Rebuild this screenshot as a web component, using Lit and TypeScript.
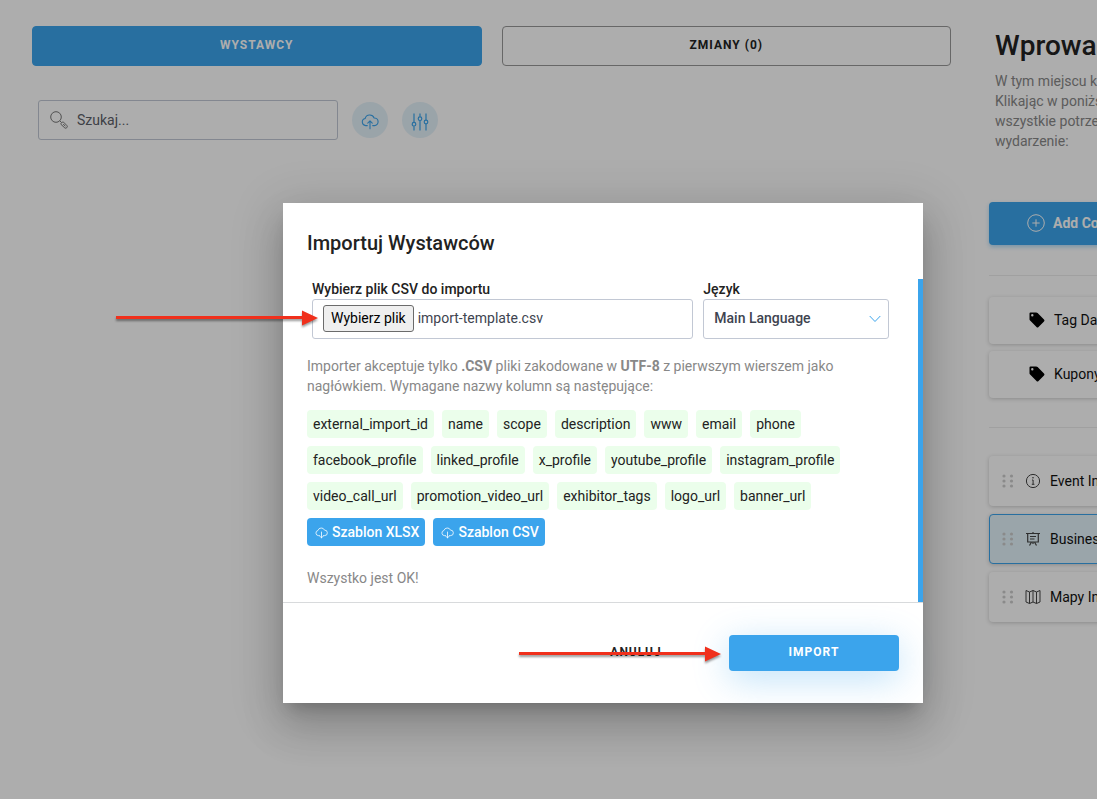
import { LitElement, html, css, svg } from "lit";
import { customElement, state, query } from "lit/decorators.js";

const COLUMNS = [
  "external_import_id", "name", "scope", "description", "www", "email", "phone",
  "facebook_profile", "linked_profile", "x_profile", "youtube_profile", "instagram_profile",
  "video_call_url", "promotion_video_url", "exhibitor_tags", "logo_url", "banner_url",
];

const cloud = (direction: "up" | "down") => html`
  <svg class="cloud" viewBox="0 0 20 18" fill="none" stroke="currentColor" stroke-width="1.2" stroke-linecap="round" stroke-linejoin="round" aria-hidden="true">
    <path d="M7 13H5.2A4 4 0 0 1 4.6 5.1A5.3 5.3 0 0 1 14.6 4.6A4.2 4.2 0 0 1 15 13H13" />
    ${direction === "up"
      ? svg`<path d="M10 16.5V8M7.5 10.2L10 7.7L12.5 10.2" />`
      : svg`<path d="M10 7.5V16.5M7.5 14L10 16.5L12.5 14" />`}
  </svg>`;

const tagIcon = html`
  <svg class="tag" viewBox="0 0 16 16" aria-hidden="true">
    <path fill="currentColor" fill-rule="evenodd" d="M1.5 0.5H7.2Q8 .5 8.6 1.1L15 7.5Q16 8.5 15 9.5L9.5 15Q8.5 16 7.5 15L1.1 8.6Q.5 8 .5 7.2V1.5Q.5 .5 1.5 .5ZM3.3 2.1A1.2 1.2 0 1 0 3.3 4.5A1.2 1.2 0 1 0 3.3 2.1Z" />
  </svg>`;

const infoIcon = html`
  <svg class="glyph" viewBox="0 0 16 16" fill="none" stroke="currentColor" aria-hidden="true">
    <circle cx="8" cy="8" r="6.6" /><path d="M7 7H8.1V11.3M6.8 11.3H9.4" /><circle cx="8" cy="4.8" r=".4" />
  </svg>`;

const boardIcon = html`
  <svg class="glyph" viewBox="0 0 16 16" fill="none" stroke="currentColor" stroke-width="1.2" aria-hidden="true">
    <path d="M1 2.5H15M2.7 2.5V11H13.3V2.5M8 1V2.5M5 5.5H11M5 8H9.5M6.5 11L4.5 14.5M9.5 11L11.5 14.5M8 11V13" />
  </svg>`;

const mapIcon = html`
  <svg class="glyph" viewBox="0 0 16 16" fill="none" stroke="currentColor" stroke-linejoin="round" aria-hidden="true">
    <path d="M1 1.5L4.5 3L8 1.5L11.5 3L15 1.5V13L11.5 14.5L8 13L4.5 14.5L1 13ZM4.5 3V14.5M8 1.5V13M11.5 3V14.5" />
  </svg>`;

const grip = html`
  <svg class="grip" viewBox="0 0 12 14" fill="currentColor" aria-hidden="true">
    <circle cx="2" cy="2" r="1.6" /><circle cx="9.5" cy="2" r="1.6" />
    <circle cx="2" cy="7" r="1.6" /><circle cx="9.5" cy="7" r="1.6" />
    <circle cx="2" cy="12" r="1.6" /><circle cx="9.5" cy="12" r="1.6" />
  </svg>`;

const arrow = html`
  <svg class="arrow" viewBox="0 0 202 20" aria-hidden="true">
    <path fill="#f0301c" d="M0 8H186V2.5L202 10L186 17.5V11H0Z" />
  </svg>`;

@customElement("app-root")
export class AppRoot extends LitElement {
  @state() private fileName = "import-template.csv";
  @query(".file-input") private fileInput!: HTMLInputElement;

  static styles = css`
    :host {
      display: block;
      height: 100vh;
      overflow: hidden;
      font: 14px/20px Roboto, sans-serif;
      color: #222;
      background: #fff;
    }
    * { box-sizing: border-box; }
    button, input, select { font: inherit; color: inherit; margin: 0; }
    button { cursor: pointer; }
    h1, h2, p { margin: 0; }
    a { color: inherit; text-decoration: none; }

    .page {
      position: relative;
      width: calc(100% + 109px);
      min-height: calc(100% + 107px);
      display: grid;
      grid-template-columns: minmax(0, 1fr) 201px;
      gap: 38px;
      padding: 26px 16px 0 32px;
    }
    .tabs { display: grid; grid-template-columns: 1fr 1fr; gap: 20px; }
    .tab, .action {
      height: 40px;
      border: 1px solid #999;
      border-radius: 4px;
      background: none;
      padding: 0 0 3px;
      font-size: 12px;
      font-weight: 700;
      letter-spacing: 1px;
      text-transform: uppercase;
    }
    .tab.on { background: #3ba4ec; border-color: #3ba4ec; color: #fff; }
    .tools { display: flex; align-items: center; padding: 34px 6px 0; gap: 14px; }
    .search {
      display: flex;
      align-items: center;
      gap: 9px;
      width: 300px;
      height: 40px;
      border: 1px solid #c2c8d4;
      border-radius: 3px;
      padding: 0 11px;
      color: #777;
    }
    .search svg { width: 18px; height: 18px; flex: none; }
    .search input { flex: 1; min-width: 0; border: 0; outline: 0; padding: 0; background: none; color: #3e4450; }
    .search input::placeholder { color: #5c6068; opacity: 1; }
    .round {
      width: 36px;
      height: 36px;
      border: 0;
      border-radius: 50%;
      padding: 3px 0 0;
      background: #e4f2fa;
      color: #3ba4ec;
      display: grid;
      place-items: center;
    }
    .round svg { width: 18px; height: 18px; }

    .side h1 { padding-left: 6px; font-size: 28px; line-height: 40px; font-weight: 500; white-space: nowrap; }
    .side p { padding: 5px 0 0 6px; color: #888; white-space: nowrap; }
    .side p span { display: block; }
    .add {
      display: flex;
      align-items: center;
      gap: 8px;
      width: 100%;
      height: 43px;
      margin-top: 51px;
      padding: 0 38px 2px;
      border: 0;
      border-radius: 4px;
      background: #3ba4ec;
      color: #fff;
      font-weight: 700;
      white-space: nowrap;
      box-shadow: 0 2px 4px #3ba4ec66;
    }
    .add svg { width: 18px; height: 18px; flex: none; }
    .group { display: grid; gap: 7px; margin-top: 30px; border-top: 1px solid #ececec; padding-top: 21px; }
    .group.modules { gap: 8px; margin-top: 29px; padding-top: 28px; }
    .card {
      display: flex;
      align-items: center;
      height: 47px;
      border: 1px solid transparent;
      border-radius: 4px;
      padding: 0 39px 1px;
      gap: 9px;
      white-space: nowrap;
      color: #111;
      box-shadow: 0 1px 4px #0003;
    }
    .modules .card { height: 50px; padding: 0 12px; gap: 0; }
    .modules .card.on { background: #e3f4fb; border-color: #3ba4ec; }
    .tag { width: 16px; height: 16px; color: #000; flex: none; }
    .grip { width: 12px; height: 14px; margin-right: 11px; color: #ccc; flex: none; }
    .glyph { width: 16px; height: 16px; margin-right: 9px; color: #444; flex: none; }

    .overlay {
      position: absolute;
      inset: 0;
      display: grid;
      place-items: center;
      background: #00000052;
    }
    .dialog {
      width: 640px;
      background: #fff;
      box-shadow: 0 11px 15px -7px #0003, 0 24px 38px 3px #00000024, 0 9px 46px 8px #0000001f;
    }
    .dialog h2 { padding: 24px 24px 20px; font-size: 20px; line-height: 32px; font-weight: 500; }
    .body { border-right: 5px solid #3ba4ec; padding: 0 24px 14px; }
    .fields { display: grid; grid-template-columns: 2fr 1fr; }
    .field { position: relative; padding: 0 5px; }
    .field label { display: block; font-weight: 500; }
    .box {
      position: relative;
      display: flex;
      align-items: center;
      gap: 4px;
      height: 40px;
      border: 1px solid #c2c8d4;
      border-radius: 3px;
      padding: 0 10px 2px;
      color: #3e4450;
    }
    .file-input { position: absolute; width: 1px; height: 1px; opacity: 0; }
    .pick { height: 27px; border: 1px solid #6b6b6b; border-radius: 3px; padding: 0 7px; background: #efefef; color: #000; }
    .language {
      width: 100%;
      height: 40px;
      appearance: none;
      border: 1px solid #c2c8d4;
      border-radius: 3px;
      background: #fff;
      padding: 0 10px 2px;
      font-weight: 500;
      color: #3e4450;
    }
    .chevron { position: absolute; right: 13px; bottom: 16px; width: 12px; height: 8px; pointer-events: none; color: #3ba4ec; }
    .note { padding-top: 17px; color: #888; }
    .chips { display: flex; flex-wrap: wrap; gap: 8px; padding: 14px 24px 0 0; }
    .chip { border-radius: 4px; padding: 4px 6px; background: #ebfeeb; color: #222; }
    .downloads { display: flex; gap: 8px; padding-top: 8px; }
    .download { display: flex; align-items: center; gap: 4px; border-radius: 4px; padding: 4px 6px 4px 8px; background: #3ba4ec; color: #fff; font-weight: 500; }
    .download svg { width: 13px; height: 12px; margin-top: 2px; }
    .status { padding-top: 22px; color: #888; }
    .footer {
      position: relative;
      display: flex;
      justify-content: flex-end;
      gap: 8px;
      border-top: 1px solid #d8dadc;
      padding: 32px 24px;
    }
    .action { width: 170px; height: 36px; border: 0; }
    .action.primary { background: #3ba4ec; color: #fff; box-shadow: 0 8px 36px #3ba4ec55; }
    .arrow {
      position: absolute;
      width: 202px;
      height: 20px;
      filter: drop-shadow(0 2px 1px #0006);
      pointer-events: none;
    }
    .field .arrow { right: calc(100% - 11px); top: 29px; }
    .footer .arrow { right: 202px; top: 41px; }
  `;

  private pickFile() {
    this.fileInput.click();
  }

  private fileChanged() {
    this.fileName = this.fileInput.files?.[0]?.name ?? this.fileName;
  }

  render() {
    return html`
      <div class="page">
        <main>
          <div class="tabs">
            <button class="tab on">Wystawcy</button>
            <button class="tab">Zmiany (0)</button>
          </div>
          <div class="tools">
            <label class="search">
              <svg viewBox="0 0 18 18" fill="none" stroke="currentColor" aria-hidden="true">
                <circle cx="6" cy="6" r="5.3" />
                <path d="M9.8 9.8L11.5 11.5M11 12.4L12.4 11Q13 10.6 13.6 11.2L17 14.7Q17.8 15.7 16.8 16.7Q15.8 17.7 14.8 16.9L11.1 13.5Q10.5 13 11 12.4ZM13.2 13L15.4 15.3" />
              </svg>
              <input type="search" placeholder="Szukaj..." aria-label="Szukaj" />
            </label>
            <button class="round" aria-label="Import">${cloud("up")}</button>
            <button class="round" aria-label="Filtry">
              <svg viewBox="0 0 18 18" fill="none" stroke="currentColor" stroke-width="1.2" aria-hidden="true">
                <path d="M3 .5V9.2M3 13.2V17.5M9 .5V3.7M9 7.7V17.5M15 .5V7M15 11V17.5" />
                <circle cx="3" cy="11.2" r="1.8" /><circle cx="9" cy="5.7" r="1.8" /><circle cx="15" cy="9" r="1.8" />
              </svg>
            </button>
          </div>
        </main>
        <aside class="side">
          <h1>Wprowad</h1>
          <p><span>W tym miejscu ko</span><span>Klikając w poniżs</span><span>wszystkie potrzeb</span><span>wydarzenie:</span></p>
          <button class="add">
            <svg viewBox="0 0 18 18" fill="none" stroke="currentColor" aria-hidden="true">
              <circle cx="9" cy="9" r="8.3" /><path d="M9 5.3V12.7M5.3 9H12.7" />
            </svg>
            Add Co
          </button>
          <nav class="group">
            <a class="card" href="#tags">${tagIcon}Tag Dat</a>
            <a class="card" href="#coupons">${tagIcon}Kupony</a>
          </nav>
          <nav class="group modules">
            <a class="card" href="#event">${grip}${infoIcon}Event In</a>
            <a class="card on" href="#business">${grip}${boardIcon}Business</a>
            <a class="card" href="#maps">${grip}${mapIcon}Mapy In</a>
          </nav>
        </aside>
        <div class="overlay">
          <section class="dialog" role="dialog" aria-modal="true" aria-labelledby="title">
            <h2 id="title">Importuj Wystawców</h2>
            <div class="body">
              <div class="fields">
                <div class="field">
                  <label for="file">Wybierz plik CSV do importu</label>
                  <div class="box">
                    <input id="file" class="file-input" type="file" accept=".csv" tabindex="-1" @change=${this.fileChanged} />
                    <button class="pick" @click=${this.pickFile}>Wybierz plik</button>
                    <span>${this.fileName}</span>
                  </div>
                  ${arrow}
                </div>
                <div class="field">
                  <label for="language">Język</label>
                  <select id="language" class="language"><option>Main Language</option></select>
                  <svg class="chevron" viewBox="0 0 12 8" fill="none" stroke="currentColor" aria-hidden="true"><path d="M.7 1L6 6.5L11.3 1" /></svg>
                </div>
              </div>
              <p class="note">
                Importer akceptuje tylko <b>.CSV</b> pliki zakodowane w <b>UTF-8</b> z pierwszym wierszem jako
                nagłówkiem. Wymagane nazwy kolumn są następujące:
              </p>
              <div class="chips">${COLUMNS.map((name) => html`<span class="chip">${name}</span>`)}</div>
              <div class="downloads">
                <a class="download" href="#xlsx">${cloud("down")}Szablon XLSX</a>
                <a class="download" href="#csv">${cloud("down")}Szablon CSV</a>
              </div>
              <p class="status">Wszystko jest OK!</p>
            </div>
            <div class="footer">
              <button class="action">Anuluj</button>
              <button class="action primary">Import</button>
              ${arrow}
            </div>
          </section>
        </div>
      </div>
    `;
  }
}
